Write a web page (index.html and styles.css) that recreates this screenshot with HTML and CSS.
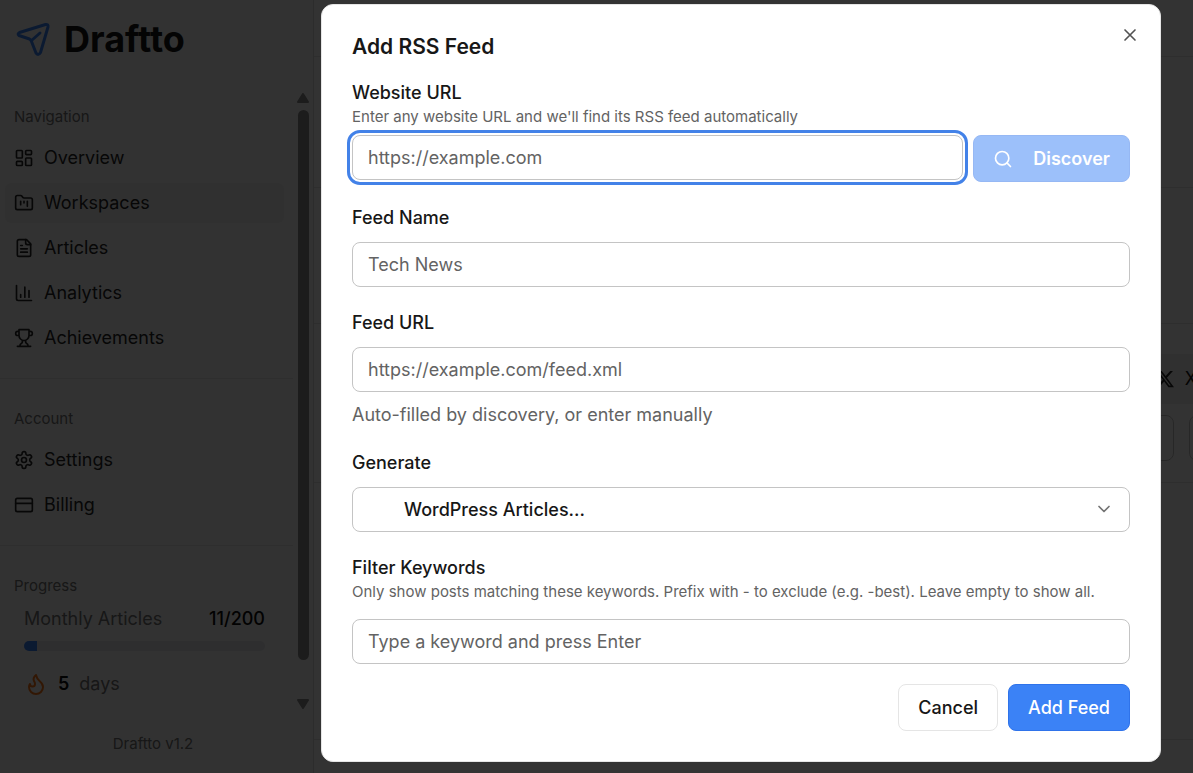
FILE: index.html
```html
<!DOCTYPE html>
<html lang="en">
<head>
    <meta charset="UTF-8">
    <meta name="viewport" content="width=device-width, initial-scale=1.0">
    <title>Draftto - Workspaces</title>
    <link rel="stylesheet" href="styles.css">
</head>
<body>
    <div class="app">
        <aside class="sidebar">
            <div class="brand">
                <svg class="brand-icon" viewBox="0 0 38 38"><path d="M5.500 12.500 31.500 4.500Q34.500 4 34 7L26.500 32.500Q24.500 36 22 33L17.500 21.500Q17 20 15.500 19L5 15.500Q3 14 5.500 12.500ZM17.500 20.500 26 13"/></svg>
                <span>Draftto</span>
            </div>
            <div class="sidebar-body">
                <div class="sidebar-content">
                    <nav class="group">
                        <div class="group-label">Navigation</div>
                        <a class="item" href="#overview"><svg class="icon" viewBox="0 0 24 24"><rect width="7" height="9" x="3" y="3" rx="1"/><rect width="7" height="5" x="14" y="3" rx="1"/><rect width="7" height="9" x="14" y="12" rx="1"/><rect width="7" height="5" x="3" y="16" rx="1"/></svg>Overview</a>
                        <a class="item active" href="#workspaces"><svg class="icon" viewBox="0 0 24 24"><path d="M4 20h16a2 2 0 0 0 2-2V8a2 2 0 0 0-2-2h-7.930a2 2 0 0 1-1.660-.900l-.820-1.200A2 2 0 0 0 7.930 3H4a2 2 0 0 0-2 2v13c0 1.100.900 2 2 2Z"/><path d="M8 10v4M12 10v2M16 10v6"/></svg>Workspaces</a>
                        <a class="item" href="#articles"><svg class="icon" viewBox="0 0 24 24"><path d="M15 2H6a2 2 0 0 0-2 2v16a2 2 0 0 0 2 2h12a2 2 0 0 0 2-2V7Z"/><path d="M14 2v4a2 2 0 0 0 2 2h4M10 9H8M16 13H8M16 17H8"/></svg>Articles</a>
                        <a class="item" href="#analytics"><svg class="icon" viewBox="0 0 24 24"><path d="M3 3v16a2 2 0 0 0 2 2h16M18 17V9M13 17V5M8 17v-3"/></svg>Analytics</a>
                        <a class="item" href="#achievements"><svg class="icon" viewBox="0 0 24 24"><path d="M6 9H4.500a2.500 2.500 0 0 1 0-5H6M18 9h1.500a2.500 2.500 0 0 0 0-5H18M4 22h16M10 14.660V17c0 .550-.470.980-.970 1.210C7.850 18.750 7 20.240 7 22M14 14.660V17c0 .550.470.980.970 1.210C16.150 18.750 17 20.240 17 22M18 2H6v7a6 6 0 0 0 12 0V2Z"/></svg>Achievements</a>
                    </nav>
                    <nav class="group">
                        <div class="group-label">Account</div>
                        <a class="item" href="#settings"><svg class="icon" viewBox="0 0 24 24"><path d="M12.220 2h-.440a2 2 0 0 0-2 2v.180a2 2 0 0 1-1 1.730l-.430.250a2 2 0 0 1-2 0l-.150-.080a2 2 0 0 0-2.730.730l-.220.380a2 2 0 0 0 .730 2.730l.150.100a2 2 0 0 1 1 1.720v.510a2 2 0 0 1-1 1.740l-.150.090a2 2 0 0 0-.730 2.730l.220.380a2 2 0 0 0 2.730.730l.150-.080a2 2 0 0 1 2 0l.430.250a2 2 0 0 1 1 1.730V20a2 2 0 0 0 2 2h.440a2 2 0 0 0 2-2v-.180a2 2 0 0 1 1-1.730l.430-.250a2 2 0 0 1 2 0l.150.080a2 2 0 0 0 2.730-.730l.220-.390a2 2 0 0 0-.730-2.730l-.150-.080a2 2 0 0 1-1-1.740v-.500a2 2 0 0 1 1-1.740l.150-.090a2 2 0 0 0 .730-2.730l-.220-.380a2 2 0 0 0-2.730-.730l-.150.080a2 2 0 0 1-2 0l-.430-.250a2 2 0 0 1-1-1.730V4a2 2 0 0 0-2-2z"/><circle cx="12" cy="12" r="3"/></svg>Settings</a>
                        <a class="item" href="#billing"><svg class="icon" viewBox="0 0 24 24"><rect width="20" height="16" x="2" y="4" rx="2"/><path d="M2 10h20"/></svg>Billing</a>
                    </nav>
                    <section class="group">
                        <div class="group-label">Progress</div>
                        <div class="usage">
                            <span>Monthly Articles</span>
                            <strong>11/200</strong>
                        </div>
                        <div class="bar"><div class="bar-fill" style="width: 5.5%"></div></div>
                        <div class="streak">
                            <svg class="flame" viewBox="0 0 24 24"><path d="M8.500 14.500A2.500 2.500 0 0 0 11 12c0-1.380-.500-2-1-3-1.072-2.143-.224-4.054 2-6 .500 2.500 2 4.900 4 6.500 2 1.600 3 3.500 3 5.500a7 7 0 1 1-14 0c0-1.153.433-2.294 1-3a2.500 2.500 0 0 0 2.500 2.500z"/></svg>
                            <strong>5</strong>
                            <span>days</span>
                        </div>
                    </section>
                </div>
                <div class="scrollbar">
                    <svg class="arrow" viewBox="0 0 12 10"><path d="M6 1 11 9H1z"/></svg>
                    <div class="thumb"></div>
                    <svg class="arrow" viewBox="0 0 12 10"><path d="M6 9 11 1H1z"/></svg>
                </div>
            </div>
            <div class="version">Draftto v1.2</div>
        </aside>
        <main class="main">
            <div class="topbar"></div>
            <div class="page-head"></div>
            <div class="stats"></div>
            <div class="panel">
                <div class="tabs">
                    <svg class="x-logo" viewBox="0 0 24 24"><path d="M18.244 2.250h3.308l-7.227 8.260 8.502 11.240H16.170l-5.214-6.817L4.990 21.750H1.680l7.730-8.835L1.254 2.250H8.080l4.713 6.231zm-1.161 17.520h1.833L7.084 4.126H5.117z"/></svg>
                    <span>X</span>
                </div>
                <div class="filters">
                    <div class="filter"></div>
                    <div class="filter filter-next"></div>
                </div>
            </div>
            <div class="list"></div>
        </main>
    </div>

    <div class="overlay">
        <div class="dialog" role="dialog" aria-labelledby="dialogTitle">
            <button type="button" class="close" aria-label="Close"><svg viewBox="0 0 24 24"><path d="M18 6 6 18M6 6l12 12"/></svg></button>
            <h2 id="dialogTitle">Add RSS Feed</h2>
            <form>
                <div class="field">
                    <label for="websiteUrl">Website URL</label>
                    <p class="help">Enter any website URL and we'll find its RSS feed automatically</p>
                    <div class="row">
                        <input type="text" id="websiteUrl" class="focused" placeholder="https://example.com">
                        <button type="button" class="btn btn-primary btn-discover" disabled><svg viewBox="0 0 24 24"><circle cx="11" cy="11" r="8"/><path d="m21 21-4.300-4.300"/></svg>Discover</button>
                    </div>
                </div>
                <div class="field">
                    <label for="feedName">Feed Name</label>
                    <input type="text" id="feedName" class="control" placeholder="Tech News">
                </div>
                <div class="field">
                    <label for="feedUrl">Feed URL</label>
                    <input type="text" id="feedUrl" class="control" placeholder="https://example.com/feed.xml">
                    <p class="hint">Auto-filled by discovery, or enter manually</p>
                </div>
                <div class="field">
                    <label for="generate">Generate</label>
                    <div class="select control">
                        <select id="generate">
                            <option>WordPress Articles...</option>
                        </select>
                        <svg class="chevron" viewBox="0 0 24 24"><path d="m6 9 6 6 6-6"/></svg>
                    </div>
                </div>
                <div class="field">
                    <label for="keywords">Filter Keywords</label>
                    <p class="help">Only show posts matching these keywords. Prefix with - to exclude (e.g. -best). Leave empty to show all.</p>
                    <input type="text" id="keywords" class="keywords" placeholder="Type a keyword and press Enter">
                </div>
                <div class="actions">
                    <button type="button" class="btn">Cancel</button>
                    <button type="submit" class="btn btn-primary">Add Feed</button>
                </div>
            </form>
        </div>
    </div>
</body>
</html>
```
FILE: styles.css
```css
* { box-sizing: border-box; }
body { margin: 0; font-family: Inter, sans-serif; font-size: 18px; line-height: 24px; color: #171717; background: #fff; }
h2, p { margin: 0; }
input, select, button { font: inherit; color: inherit; }
svg { fill: none; stroke: currentColor; stroke-width: 2; stroke-linecap: round; stroke-linejoin: round; flex: none; }
strong { font-weight: 500; color: #0a0a0a; }

/* page behind the dialog */
.app { display: flex; height: 100vh; overflow: hidden; }
.sidebar { display: flex; flex-direction: column; width: 314px; flex: none; background: #fafafa; border-right: 1px solid #dcdcdc; }
.brand { display: flex; align-items: center; gap: 12px; padding: 15px 14px 0; font-size: 36px; font-weight: 700; line-height: 48px; }
.brand-icon { width: 38px; height: 38px; color: #3b82f6; stroke-width: 3; }
.sidebar-body { display: flex; flex: 1; margin-top: 29px; min-height: 0; }
.sidebar-content { flex: 1; min-width: 0; overflow: hidden; }
.group { padding: 20px 9px 15px 5px; border-bottom: 1px solid #e4e4e4; }
.group:first-child { padding-top: 5px; }
.group:last-child { border-bottom: 0; }
.group-label { height: 32px; padding: 0 9px; margin-bottom: 9px; font-size: 15px; line-height: 40px; color: #737373; }
.item { display: flex; align-items: center; gap: 10px; height: 40px; padding: 0 9px; margin-bottom: 5px; border-radius: 6px; color: #262626; text-decoration: none; }
.item.active { background: #f0f0f0; }
.icon { width: 20px; height: 20px; }
.usage { display: flex; justify-content: space-between; padding: 0 19px; color: #737373; }
.bar { height: 10px; margin: 10px 19px 0; border-radius: 5px; background: #e4e5ea; overflow: hidden; }
.bar-fill { height: 100%; background: #3b82f6; }
.streak { display: flex; align-items: center; gap: 10px; padding: 21px 19px 0; color: #737373; }
.streak strong { font-weight: 600; }
.flame { width: 24px; height: 24px; color: #f97316; }
.scrollbar { display: flex; flex-direction: column; align-items: center; width: 20px; padding-bottom: 4px; }
.arrow { width: 12px; height: 10px; margin-top: 1px; fill: #8b8b8b; stroke: #8b8b8b; }
.thumb { flex: 1; width: 11px; margin: 7px 0 38px; border-radius: 6px; background: #8b8b8b; }
.version { padding: 19px 0 17px; margin-right: 7px; text-align: center; font-size: 15px; color: #737373; }

.main { flex: 1; min-width: 0; overflow: hidden; }
.topbar { height: 57px; border-bottom: 1px solid #e4e4e4; }
.page-head { height: 131px; border-bottom: 1px solid #e4e4e4; }
.stats { height: 136px; border-bottom: 1px solid #e4e4e4; }
.panel { padding: 30px 0 0 30px; border-bottom: 1px solid #e4e4e4; }
.tabs { display: flex; align-items: center; justify-content: flex-end; gap: 10px; height: 50px; margin-right: -4px; background: #f0f0f0; }
.x-logo { width: 20px; height: 20px; fill: #262626; stroke: none; }
.filters { display: flex; gap: 15px; padding: 11px 0 21px; }
.filter { flex: 1; height: 46px; border: 1px solid #c4c4c4; border-radius: 8px; }
.filter-next { flex: 0 0 40px; margin-right: -36px; }
.list { height: 257px; border-bottom: 1px solid #e4e4e4; }

/* dialog */
.overlay { position: fixed; inset: 0; display: flex; align-items: flex-start; padding: 4px 32px 11px 321px; background: rgba(0, 0, 0, 0.8); }
.dialog { position: relative; flex: 1; min-width: 0; padding: 30px; border: 1px solid #e5e5e5; border-radius: 12px; background: #fff; }
.dialog h2 { margin-bottom: 22px; font-size: 21px; font-weight: 600; line-height: 24px; }
.close { position: absolute; top: 20px; right: 20px; display: flex; padding: 0; border: 0; background: none; color: #525252; }
.close svg { width: 20px; height: 20px; }
.field { margin-bottom: 24px; }
.field label { display: block; font-weight: 500; }
.help { margin-top: 2px; font-size: 15px; line-height: 20px; color: #636363; }
.hint { margin-top: 11px; color: #636363; }
.row { display: flex; align-items: flex-start; gap: 10px; margin-top: 8px; }
.control { margin-top: 12px; }
.field .keywords { margin-top: 17px; }
input, select { display: block; width: 100%; height: 45px; padding: 0 15px; border: 1px solid #c4c4c4; border-radius: 8px; background: #fff; }
input::placeholder { color: #636363; opacity: 1; }
.focused { flex: 1; min-width: 0; outline: 3px solid #4382e8; outline-offset: 2px; }
.select { position: relative; }
.select select { padding: 0 50px 0 51px; font-weight: 500; appearance: none; }
.chevron { position: absolute; top: 12px; right: 16px; width: 20px; height: 20px; color: #737373; pointer-events: none; }
.actions { display: flex; justify-content: flex-end; gap: 10px; margin-top: -4px; }
.btn { display: flex; align-items: center; height: 47px; padding: 0 19px; border: 1px solid #e5e5e5; border-radius: 8px; background: #fff; font-weight: 500; }
.btn-primary { border-color: #2f73ea; background: #3b82f6; color: #fff; }
.btn-discover { gap: 20px; font-weight: 600; opacity: 0.5; }
.btn-discover svg { width: 20px; height: 20px; }
```
